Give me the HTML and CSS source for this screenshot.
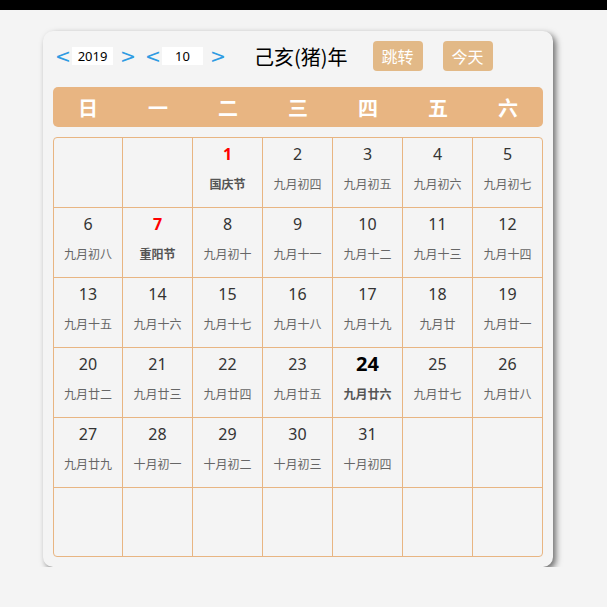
FILE: index.html
```html
<!DOCTYPE html>
<html>
<head>
  <meta charset="utf-8">
  <title>万年历</title>
  <link rel="stylesheet" href="styles.css">
</head>
<body>
  <div class="topbar"></div>
  <div class="calendar">
    <!-- Year / month switch, lunar year, actions -->
    <div class="toolbar">
      <span class="arrow prev">&lt;</span>
      <input class="num-input" type="text" value="2019">
      <span class="arrow next">&gt;</span>
      <span class="arrow prev gap">&lt;</span>
      <input class="num-input" type="text" value="10">
      <span class="arrow next">&gt;</span>
      <span class="ganzhi">己亥(猪)年</span>
      <button class="btn">跳转</button>
      <button class="btn">今天</button>
    </div>
    <!-- Week header -->
    <div class="weeks">
      <span>日</span><span>一</span><span>二</span><span>三</span><span>四</span><span>五</span><span>六</span>
    </div>
    <!-- Day grid -->
    <div class="days">
      <div class="day"></div>
      <div class="day"></div>
      <div class="day holiday"><b>1</b><i>国庆节</i></div>
      <div class="day"><b>2</b><i>九月初四</i></div>
      <div class="day"><b>3</b><i>九月初五</i></div>
      <div class="day"><b>4</b><i>九月初六</i></div>
      <div class="day"><b>5</b><i>九月初七</i></div>

      <div class="day"><b>6</b><i>九月初八</i></div>
      <div class="day holiday"><b>7</b><i>重阳节</i></div>
      <div class="day"><b>8</b><i>九月初十</i></div>
      <div class="day"><b>9</b><i>九月十一</i></div>
      <div class="day"><b>10</b><i>九月十二</i></div>
      <div class="day"><b>11</b><i>九月十三</i></div>
      <div class="day"><b>12</b><i>九月十四</i></div>

      <div class="day"><b>13</b><i>九月十五</i></div>
      <div class="day"><b>14</b><i>九月十六</i></div>
      <div class="day"><b>15</b><i>九月十七</i></div>
      <div class="day"><b>16</b><i>九月十八</i></div>
      <div class="day"><b>17</b><i>九月十九</i></div>
      <div class="day"><b>18</b><i>九月廿</i></div>
      <div class="day"><b>19</b><i>九月廿一</i></div>

      <div class="day"><b>20</b><i>九月廿二</i></div>
      <div class="day"><b>21</b><i>九月廿三</i></div>
      <div class="day"><b>22</b><i>九月廿四</i></div>
      <div class="day"><b>23</b><i>九月廿五</i></div>
      <div class="day today"><b>24</b><i>九月廿六</i></div>
      <div class="day"><b>25</b><i>九月廿七</i></div>
      <div class="day"><b>26</b><i>九月廿八</i></div>

      <div class="day"><b>27</b><i>九月廿九</i></div>
      <div class="day"><b>28</b><i>十月初一</i></div>
      <div class="day"><b>29</b><i>十月初二</i></div>
      <div class="day"><b>30</b><i>十月初三</i></div>
      <div class="day"><b>31</b><i>十月初四</i></div>
      <div class="day"></div>
      <div class="day"></div>

      <div class="day"></div>
      <div class="day"></div>
      <div class="day"></div>
      <div class="day"></div>
      <div class="day"></div>
      <div class="day"></div>
      <div class="day"></div>
    </div>
  </div>
</body>
</html>
```

FILE: styles.css
```css
/* Page */
body {
  margin: 0;
  background: #f4f4f4;
  font-family: "Noto Sans", "Noto Sans CJK SC", sans-serif;
  color: #333;
}
.topbar {
  height: 10px;
  background: #000;
}
/* Calendar card */
.calendar {
  width: 510px;
  margin: 21px 0 0 43px;
  padding: 10px;
  box-sizing: border-box;
  background: #f4f4f4;
  border-radius: 10px;
  box-shadow: 3px 3px 6px rgba(0,0,0,0.55);
}
/* Toolbar */
.toolbar {
  display: flex;
  align-items: center;
  height: 30px;
  padding-left: 2px;
}
.arrow {
  color: #2e9be2;
  font-size: 19px;
  font-family: "DejaVu Sans", sans-serif;
  line-height: 1;
  width: 11px;
}
.arrow.prev { margin-right: 6px; }
.arrow.next { margin-left: 7px; }
.arrow.gap { margin-left: 14px; }
.num-input {
  width: 41px;
  height: 18px;
  padding: 0;
  border: none;
  outline: none;
  background: #fff;
  text-align: center;
  font-family: "Noto Sans", sans-serif;
  font-size: 13px;
  color: #000;
}
.ganzhi {
  margin-left: 33px;
  font-size: 20px;
  color: #000;
  font-family: "Noto Sans CJK SC", sans-serif;
}
.btn {
  width: 50px;
  height: 30px;
  margin-left: 25px;
  padding: 0;
  border: none;
  border-radius: 4px;
  background: #e2b987;
  color: #fff;
  font-size: 16px;
  font-family: "Noto Sans CJK SC", sans-serif;
}
.btn + .btn { margin-left: 20px; }
/* Week header */
.weeks {
  display: grid;
  grid-template-columns: repeat(7, 70px);
  height: 40px;
  margin-top: 16px;
  border-radius: 5px;
  background: #e8b582;
  color: #fff;
  font-size: 20px;
  font-weight: bold;
  font-family: "Noto Sans CJK SC", sans-serif;
}
.weeks span {
  display: flex;
  align-items: center;
  justify-content: center;
}
/* Day grid */
.days {
  display: grid;
  grid-template-columns: 69px repeat(5, 70px) 69px;
  grid-template-rows: repeat(5, 70px) 68px;
  margin-top: 10px;
  border: 1px solid #e8b582;
  border-radius: 4px;
  overflow: hidden;
}
.day {
  display: flex;
  flex-direction: column;
  align-items: center;
  box-sizing: border-box;
  border-right: 1px solid #e8b582;
  border-bottom: 1px solid #e8b582;
}
.day:nth-child(7n) { border-right: none; }
.day:nth-last-child(-n+7) { border-bottom: none; }
.day b {
  margin-top: 5px;
  height: 22px;
  line-height: 22px;
  font-size: 16px;
  font-weight: normal;
  color: #333;
}
.day i {
  margin-top: 10px;
  font-style: normal;
  font-size: 12px;
  color: #666;
  font-family: "Noto Sans CJK SC", sans-serif;
}
.holiday b {
  color: #f00;
  font-weight: bold;
}
.holiday i {
  font-weight: bold;
  color: #555;
}
.today b {
  font-size: 20px;
  font-weight: bold;
  color: #000;
}
.today i {
  font-weight: bold;
  color: #555;
}
```
